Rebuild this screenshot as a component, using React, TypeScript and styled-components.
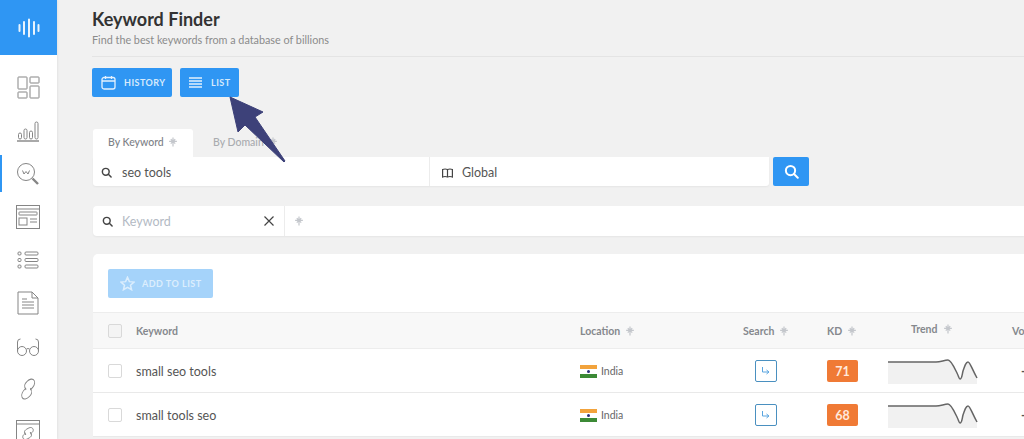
import React from 'react';
import styled, { createGlobalStyle } from 'styled-components';

const GlobalStyle = createGlobalStyle`
  html, body {
    margin: 0;
    padding: 0;
    height: 100%;
    overflow: hidden;
  }
  body {
    background: #f1f1f1;
    font-family: Lato, "Open Sans", sans-serif;
    color: #4a4a4a;
  }
  * { box-sizing: border-box; }
`;

const Shell = styled.div`
  display: flex;
  width: 1024px;
  height: 439px;
  overflow: hidden;
  position: relative;
`;

const Sidebar = styled.aside`
  width: 57px;
  flex: none;
  background: #fff;
  box-shadow: 1px 0 2px rgba(0, 0, 0, 0.06);
  display: flex;
  flex-direction: column;
  align-items: stretch;
`;

const Logo = styled.div`
  height: 55px;
  background: #2f96f3;
  display: flex;
  align-items: center;
  justify-content: center;
  flex: none;
`;

const NavList = styled.nav`
  display: flex;
  flex-direction: column;
  padding-top: 14px;
  gap: 6px;
`;

const NavItem = styled.div<{ $active?: boolean }>`
  height: 37px;
  display: flex;
  align-items: center;
  justify-content: center;
  border-left: 2px solid ${p => (p.$active ? '#2f96f3' : 'transparent')};
  margin-right: 4px;
  color: #858585;
`;

const Main = styled.main`
  flex: 1;
  min-width: 0;
  padding-left: 35px;
`;

const Header = styled.header`
  height: 57px;
  padding-top: 8px;
  border-bottom: 1px solid #e4e4e4;
`;

const Title = styled.h1`
  margin: 0;
  font-size: 18px;
  line-height: 22px;
  font-weight: 700;
  color: #333;
`;

const Subtitle = styled.p`
  margin: 2px 0 0;
  font-size: 10.8px;
  line-height: 16px;
  color: #8b8b8b;
`;

const ActionRow = styled.div`
  display: flex;
  gap: 8px;
  margin-top: 11px;
`;

const ActionButton = styled.button<{ $w: number; $gap: number }>`
  width: ${p => p.$w}px;
  height: 29px;
  border: 0;
  border-radius: 2px;
  background: #2f96f3;
  color: #d6eafc;
  display: flex;
  align-items: center;
  padding: 0 0 0 9px;
  gap: ${p => p.$gap}px;
  font: 700 9px Lato, sans-serif;
  letter-spacing: 0.45px;
`;

const Tabs = styled.div`
  display: flex;
  margin-top: 32px;
  margin-left: 1px;
`;

const Tab = styled.div<{ $active?: boolean }>`
  width: 100px;
  height: 28px;
  display: flex;
  align-items: center;
  padding: 0 0 2px ${p => (p.$active ? 15 : 20)}px;
  gap: 4px;
  font-size: 10.5px;
  font-weight: 500;
  color: ${p => (p.$active ? '#7d8187' : '#a9abaf')};
  background: ${p => (p.$active ? '#fff' : 'transparent')};
  border-radius: 3px 3px 0 0;
`;

const SearchRow = styled.div`
  display: flex;
  gap: 4px;
  margin-left: 1px;
`;

const SearchBox = styled.div`
  display: flex;
  width: 676px;
  height: 29px;
  background: #fff;
  border-radius: 0 0 3px 3px;
  box-shadow: 0 1px 2px rgba(0, 0, 0, 0.05);
`;

const SearchCell = styled.div<{ $w: number; $line?: boolean }>`
  width: ${p => p.$w}px;
  display: flex;
  align-items: center;
  padding: 2px 0 0 ${p => (p.$line ? 12 : 8)}px;
  gap: ${p => (p.$line ? 9 : 10)}px;
  font-size: 12.5px;
  color: #555;
  border-left: ${p => (p.$line ? '1px solid #ececec' : '0')};
`;

const SearchButton = styled.button`
  width: 36px;
  height: 29px;
  border: 0;
  border-radius: 2px;
  background: #2f96f3;
  color: #fff;
  display: flex;
  align-items: center;
  justify-content: center;
  padding: 0;
`;

const FilterBar = styled.div`
  display: flex;
  height: 30px;
  margin: 20px 0 0 1px;
  background: #fff;
  border-radius: 4px 0 0 4px;
  box-shadow: 0 1px 2px rgba(0, 0, 0, 0.05);
`;

const FilterInput = styled.div`
  width: 192px;
  display: flex;
  align-items: center;
  padding: 0 10px 0 9px;
  gap: 9px;
  font-size: 12.5px;
  color: #b3bac4;
  border-right: 1px solid #ececec;
`;

const Grow = styled.span`
  flex: 1;
`;

const FilterSpark = styled.div`
  display: flex;
  align-items: center;
  padding-left: 9px;
`;

const Card = styled.section`
  margin: 18px 0 0 1px;
  background: #fff;
  border-radius: 5px 0 0 0;
`;

const CardTop = styled.div`
  height: 58px;
  padding: 15px 0 0 15px;
`;

const AddButton = styled.button`
  width: 105px;
  height: 29px;
  border: 0;
  border-radius: 2px;
  background: #a5d3fa;
  color: #dceefd;
  display: flex;
  align-items: center;
  padding: 0 0 0 12px;
  gap: 7px;
  font: 700 9px Lato, sans-serif;
  letter-spacing: 0.5px;
`;

const columns = '28px 444px 163px 84px 61px 124px 1fr';

const HeadRow = styled.div`
  display: grid;
  grid-template-columns: 15px ${columns};
  align-items: center;
  height: 37px;
  background: #f8f8f8;
  border-top: 1px solid #ededed;
  border-bottom: 1px solid #ededed;
  font-size: 10.5px;
  font-weight: 700;
  color: #85888d;
`;

const Row = styled.div`
  display: grid;
  grid-template-columns: 15px ${columns};
  align-items: center;
  height: 44px;
  padding-top: 1px;
  border-bottom: 1px solid #e9e9e9;
  font-size: 12.5px;
  color: #555;
`;

const Box = styled.span<{ $head?: boolean }>`
  grid-column: 2;
  display: block;
  width: 14px;
  height: 14px;
  background: ${p => (p.$head ? '#f4f4f4' : '#fff')};
  border: 1px solid #d9d9d9;
  border-radius: 2px;
`;

const HeadCell = styled.div<{ $up?: boolean }>`
  display: flex;
  align-items: center;
  gap: 5px;
  white-space: nowrap;
  margin-top: ${p => (p.$up ? -3 : 0)}px;
`;

const TrendHead = styled(HeadCell)`
  padding-left: 23px;
`;

const Location = styled.div`
  display: flex;
  align-items: center;
  gap: 4px;
  font-size: 10.5px;
  color: #666;
`;

const Flag = styled.span`
  display: flex;
  width: 17px;
  height: 13px;
  background: linear-gradient(#f2a33c 0 33%, #fff 33% 66%, #3c8a36 66% 100%);
  align-items: center;
  justify-content: center;
`;

const FlagDot = styled.span`
  width: 3px;
  height: 3px;
  border-radius: 50%;
  background: #2b2f7a;
`;

const SearchLink = styled.div`
  width: 22px;
  height: 22px;
  margin-left: 12px;
  border: 1px solid #4a90c0;
  border-radius: 2px;
  display: flex;
  align-items: center;
  justify-content: center;
  color: #5aa5e0;
`;

const Kd = styled.div`
  width: 31px;
  height: 22px;
  background: #f07a35;
  border-radius: 2px;
  color: #ffe9dc;
  font-size: 12.5px;
  font-weight: 700;
  display: flex;
  align-items: center;
  justify-content: center;
`;

const TrendBox = styled.div`
  display: flex;
  margin-top: 1px;
`;

const Volume = styled.div`
  padding-left: 9px;
  white-space: nowrap;
  font-weight: 700;
`;

const Arrow = styled.svg`
  position: absolute;
  left: 228px;
  top: 96px;
  pointer-events: none;
`;

const Spark = ({ color = '#c4c7cc' }: { color?: string }) => (
  <svg width="10" height="10" viewBox="0 0 9 9" fill="none" stroke={color} strokeWidth="1.1">
    <path d="M4.5 0.5v8M1 4h7M2.5 2l4 4M6.5 2l-4 4" />
  </svg>
);

const Loupe = ({ size = 11, color = '#444' }: { size?: number; color?: string }) => (
  <svg width={size} height={size} viewBox="0 0 12 12" fill="none" stroke={color} strokeWidth="1.6">
    <circle cx="5.2" cy="5.2" r="3.7" />
    <path d="M8 8l3 3" strokeLinecap="round" />
  </svg>
);

const Icon = ({ children }: { children: React.ReactNode }) => (
  <svg width="24" height="24" viewBox="0 0 24 24" fill="none" stroke="currentColor" strokeWidth="1">
    {children}
  </svg>
);

const trendLine = 'M0 3H48C53 3 56 1 60 1C63 1 66 8 69 14C71 18 71 20 72 20C74 20 74 16 75 12C77 6 78 3 80 3C82 3 83 8 89 19';

const Trend = () => (
  <svg width="90" height="25" viewBox="0 0 90 25" fill="none">
    <path d={`${trendLine}V25H0Z`} fill="#f1f1f1" />
    <path d={trendLine} stroke="#666" strokeWidth="1.5" />
  </svg>
);

const rows = [
  { keyword: 'small seo tools', kd: 71 },
  { keyword: 'small tools seo', kd: 68 },
];

const App: React.FC = () => (
  <Shell>
    <GlobalStyle />
    <Sidebar>
      <Logo>
        <svg width="22" height="20" viewBox="0 0 22 20" stroke="#fff" strokeWidth="2" strokeLinecap="round" opacity="0.9">
          <path d="M1.5 7v6M6 4v12M11 1.500v17M16 4v12M20.500 7v6" />
        </svg>
      </Logo>
      <NavList>
        <NavItem>
          <Icon>
            <rect x="2" y="1" width="9" height="12" rx="0.5" />
            <rect x="14" y="1" width="9" height="6" rx="0.5" />
            <rect x="2" y="16" width="9" height="6" rx="0.5" />
            <rect x="14" y="10" width="9" height="12" rx="0.5" />
          </Icon>
        </NavItem>
        <NavItem>
          <Icon>
            <path d="M1 22h22" strokeWidth="1.4" />
            <rect x="2.500" y="14" width="3" height="6" rx="1.5" />
            <rect x="8" y="10" width="3" height="10" rx="1.5" />
            <rect x="13.500" y="12" width="3" height="8" rx="1.5" />
            <rect x="19" y="3" width="3" height="17" rx="1.5" />
          </Icon>
        </NavItem>
        <NavItem $active>
          <Icon>
            <circle cx="10" cy="10" r="8.500" />
            <path d="M6.500 8.500l1.500 3.500 2-2.500 2 2.500 1.500-3.500" />
            <path d="M16.500 16.500l5.500 5.500" strokeWidth="2.4" />
          </Icon>
        </NavItem>
        <NavItem>
          <Icon>
            <rect x="0.5" y="0.5" width="23" height="23" />
            <path d="M1 4h22" />
            <rect x="3" y="7" width="18" height="3" rx="0.5" />
            <rect x="3" y="13" width="8" height="7" />
            <path d="M14 14h7M14 17h7" />
          </Icon>
        </NavItem>
        <NavItem>
          <Icon>
            <rect x="2" y="4" width="3" height="3" rx="1" />
            <rect x="9" y="4" width="13" height="3" rx="1" />
            <rect x="2" y="10.500" width="3" height="3" rx="1" />
            <rect x="9" y="10.500" width="13" height="3" rx="1" />
            <rect x="2" y="17" width="3" height="3" rx="1" />
            <rect x="9" y="17" width="13" height="3" rx="1" />
          </Icon>
        </NavItem>
        <NavItem>
          <Icon>
            <path d="M2 1h14l6 6v16H2Z" />
            <path d="M16 1v6h6" />
            <path d="M6 8h5M6 11h12M6 14h12M6 17h12" />
          </Icon>
        </NavItem>
        <NavItem>
          <Icon>
            <circle cx="6" cy="17" r="4.5" />
            <circle cx="18" cy="17" r="4.5" />
            <path d="M10.5 15q1.5-1 3 0M1.5 17V8q0-3 3-3M22.5 17V8q0-3-3-3" />
          </Icon>
        </NavItem>
        <NavItem>
          <Icon>
            <g transform="translate(4 1) scale(0.68 0.92)" strokeWidth="1.2">
              <path d="M9 13C5 9 7 6 10 4C14 1 19 0 21 3C23 6 20 10 15 13" />
              <path d="M15 11C19 15 17 18 14 20C10 23 5 24 3 21C1 18 4 14 9 11" />
            </g>
          </Icon>
        </NavItem>
        <NavItem>
          <Icon>
            <rect x="0.5" y="0.5" width="23" height="23" />
            <path d="M1 4h22" />
            <path d="M10 15C7 12 9 10 11 9C14 7 16 7 17 9C18 11 16 13 14 14" />
            <path d="M14 12C17 15 15 17 13 18C10 20 8 20 7 18C6 16 8 14 10 13" />
          </Icon>
        </NavItem>
      </NavList>
    </Sidebar>
    <Main>
      <Header>
        <Title>Keyword Finder</Title>
        <Subtitle>Find the best keywords from a database of billions</Subtitle>
      </Header>
      <ActionRow>
        <ActionButton $w={80} $gap={8}>
          <svg width="15" height="15" viewBox="0 0 15 15" fill="none" stroke="#e4f1fd" strokeWidth="1.3">
            <rect x="1" y="2.5" width="13" height="11.5" rx="2" />
            <path d="M1 6h13M4.5 1v3M10.5 1v3" />
          </svg>
          HISTORY
        </ActionButton>
        <ActionButton $w={59} $gap={9}>
          <svg width="13" height="11" viewBox="0 0 13 11" stroke="#e4f1fd" strokeWidth="1.4">
            <path d="M0 1h13M0 4h13M0 7h13M0 10h13" />
          </svg>
          LIST
        </ActionButton>
      </ActionRow>
      <Tabs>
        <Tab $active>By Keyword <Spark /></Tab>
        <Tab>By Domain <Spark /></Tab>
      </Tabs>
      <SearchRow>
        <SearchBox>
          <SearchCell $w={336}><Loupe />seo tools</SearchCell>
          <SearchCell $w={340} $line>
            <svg width="11" height="10" viewBox="0 0 11 10" fill="none" stroke="#444" strokeWidth="1.2">
              <path d="M0.6 1.5q2.500-1 4.900 0q2.500-1 4.900 0v7.500q-2.500-1-4.900 0q-2.500-1-4.900 0ZM5.500 1.500v7.500" />
            </svg>
            Global
          </SearchCell>
        </SearchBox>
        <SearchButton><Loupe size={15} color="#fff" /></SearchButton>
      </SearchRow>
      <FilterBar>
        <FilterInput>
          <Loupe />
          Keyword
          <Grow />
          <svg width="10" height="10" viewBox="0 0 10 10" stroke="#444" strokeWidth="1.2">
            <path d="M0.5 0.5l9 9M9.5 0.5l-9 9" />
          </svg>
        </FilterInput>
        <FilterSpark><Spark /></FilterSpark>
      </FilterBar>
      <Card>
        <CardTop>
          <AddButton>
            <svg width="15" height="15" viewBox="0 0 24 24" fill="none" stroke="currentColor" strokeWidth="2.4">
              <path d="M12 2l3 7 7.5.7-5.7 5 1.700 7.300-6.500-3.800L5.500 22l1.700-7.300-5.700-5L9 9Z" />
            </svg>
            ADD TO LIST
          </AddButton>
        </CardTop>
        <HeadRow>
          <Box $head />
          <HeadCell>Keyword</HeadCell>
          <HeadCell>Location <Spark /></HeadCell>
          <HeadCell>Search <Spark /></HeadCell>
          <HeadCell>KD <Spark /></HeadCell>
          <TrendHead $up>Trend <Spark /></TrendHead>
          <HeadCell>Volume</HeadCell>
        </HeadRow>
        {rows.map(r => (
          <Row key={r.keyword}>
            <Box />
            <div>{r.keyword}</div>
            <Location><Flag><FlagDot /></Flag>India</Location>
            <SearchLink>
              <svg width="10" height="8" viewBox="0 0 10 8" fill="none" stroke="currentColor" strokeWidth="1">
                <path d="M1.500 0v5h6M5.500 3l2.500 2-2.500 2" />
              </svg>
            </SearchLink>
            <Kd>{r.kd}</Kd>
            <TrendBox><Trend /></TrendBox>
            <Volume>-</Volume>
          </Row>
        ))}
      </Card>
    </Main>
    <Arrow width="62" height="70" viewBox="0 0 62 70">
      <path d="M2 1L35 16L27 21L57 65L56 66L17 29L10 36Z" fill="#3d4179" stroke="#3d4179" strokeWidth="1" strokeLinejoin="round" />
    </Arrow>
  </Shell>
);

export default App;
